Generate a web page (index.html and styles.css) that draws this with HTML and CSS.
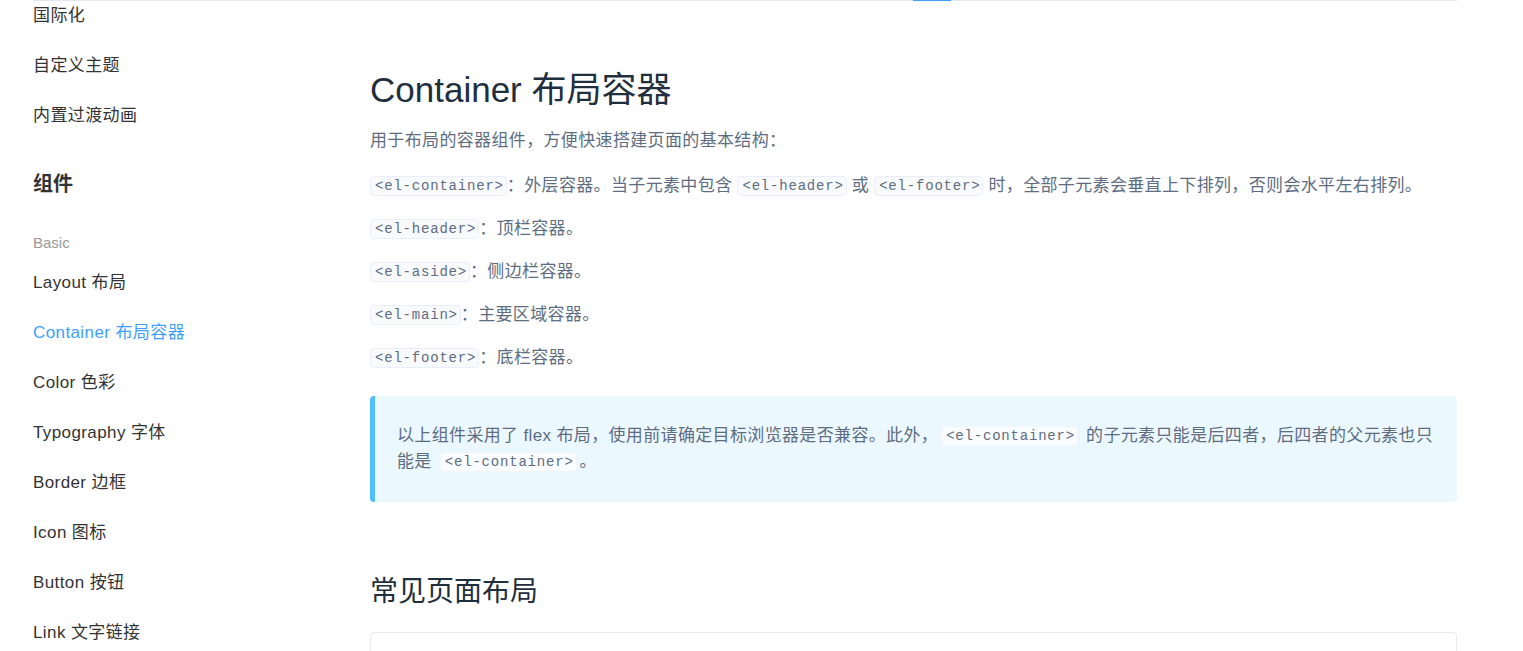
FILE: index.html
```html
<!DOCTYPE html>
<html lang="zh-CN">
<head>
<meta charset="utf-8">
<title>Container 布局容器</title>
<link rel="stylesheet" href="styles.css">
</head>
<body>
<div class="page">
  <div class="topline">
    <div class="topline-gray grow-a"></div>
    <div class="topline-blue"></div>
    <div class="topline-gray grow-b"></div>
  </div>
  <div class="layout">
    <nav class="sidebar">
      <a class="nav-item">国际化</a>
      <a class="nav-item">自定义主题</a>
      <a class="nav-item">内置过渡动画</a>
      <div class="nav-group">组件</div>
      <div class="nav-sub">Basic</div>
      <a class="nav-item">Layout 布局</a>
      <a class="nav-item active">Container 布局容器</a>
      <a class="nav-item">Color 色彩</a>
      <a class="nav-item">Typography 字体</a>
      <a class="nav-item">Border 边框</a>
      <a class="nav-item">Icon 图标</a>
      <a class="nav-item">Button 按钮</a>
      <a class="nav-item">Link 文字链接</a>
    </nav>
    <main class="content">
      <h1 class="title">Container 布局容器</h1>
      <p class="intro">用于布局的容器组件，方便快速搭建页面的基本结构：</p>
      <p class="line"><code>&lt;el-container&gt;</code>：外层容器。当子元素中包含 <code>&lt;el-header&gt;</code> 或 <code>&lt;el-footer&gt;</code> 时，全部子元素会垂直上下排列，否则会水平左右排列。</p>
      <p class="line"><code>&lt;el-header&gt;</code>：顶栏容器。</p>
      <p class="line"><code>&lt;el-aside&gt;</code>：侧边栏容器。</p>
      <p class="line"><code>&lt;el-main&gt;</code>：主要区域容器。</p>
      <p class="line"><code>&lt;el-footer&gt;</code>：底栏容器。</p>
      <div class="tip">
        <p>以上组件采用了 flex 布局，使用前请确定目标浏览器是否兼容。此外，<code>&lt;el-container&gt;</code> 的子元素只能是后四者，后四者的父元素也只能是 <code>&lt;el-container&gt;</code>。</p>
      </div>
      <h2 class="section">常见页面布局</h2>
      <div class="demo"></div>
    </main>
  </div>
</div>
</body>
</html>
```

FILE: styles.css
```css
html, body {
  margin: 0;
  padding: 0;
  background: #fff;
  overflow: hidden;
}

body {
  font-family: "Liberation Sans", "Noto Sans CJK SC", sans-serif;
  height: 651px;
}

.page {
  width: 1523px;
}

.topline {
  display: flex;
  height: 1px;
  margin-left: 33px;
  width: 1424px;
}

.topline-gray {
  background: #e4e7ed;
  height: 1px;
}

.grow-a {
  width: 880px;
}

.grow-b {
  flex: 1;
}

.topline-blue {
  width: 38px;
  height: 1px;
  background: #409eff;
}

.layout {
  display: grid;
  grid-template-columns: 370px 1087px;
}

.sidebar {
  display: flex;
  flex-direction: column;
  padding-left: 33px;
  margin-top: -10px;
}

.nav-item {
  display: block;
  font-size: 17px;
  letter-spacing: 0.4px;
  line-height: 50px;
  height: 50px;
  color: #333;
  text-decoration: none;
  white-space: nowrap;
}

.nav-item.active {
  color: #409eff;
}

.nav-group {
  font-size: 20px;
  font-weight: bold;
  color: #333;
  line-height: 36px;
  margin-top: 25px;
}

.nav-sub {
  font-size: 15px;
  color: #999;
  line-height: 26px;
  margin-top: 28px;
  margin-bottom: 2px;
}

.content {
  padding-top: 67px;
}

.title {
  margin: 0;
  font-size: 35px;
  font-weight: normal;
  line-height: 44px;
  color: #1f2f3d;
}

.content p {
  margin: 0;
  font-size: 17px;
  letter-spacing: 0.35px;
  line-height: 28px;
  color: #5e6d82;
}

.content .intro {
  margin-top: 15px;
  margin-bottom: 17px;
}

.content .line {
  margin-bottom: 15px;
}

code {
  font-family: "Liberation Mono", "DejaVu Sans Mono", monospace;
  font-size: 14px;
  letter-spacing: 0.8px;
  color: #5e6d82;
  background: #f9fafc;
  border: 1px solid #eaeefb;
  border-radius: 4px;
  padding: 0 2px 0 4px;
  line-height: 18px;
  display: inline-block;
  vertical-align: 1px;
}

.tip {
  margin-top: 24px;
  background: #ecf8ff;
  border-left: 5px solid #50bfff;
  border-radius: 4px;
  padding: 27px 22px 27px 22px;
}

.content .tip p {
  line-height: 26px;
  color: #5e6d82;
}

.tip code {
  background: #fafcff;
  border-color: #f0f5fa;
  margin: 0 3px;
}

.section {
  margin: 70px 0 0;
  font-size: 28px;
  font-weight: normal;
  line-height: 40px;
  color: #1f2f3d;
}

.demo {
  margin-top: 20px;
  height: 120px;
  border: 1px solid #ebebeb;
  border-radius: 4px;
}
```
